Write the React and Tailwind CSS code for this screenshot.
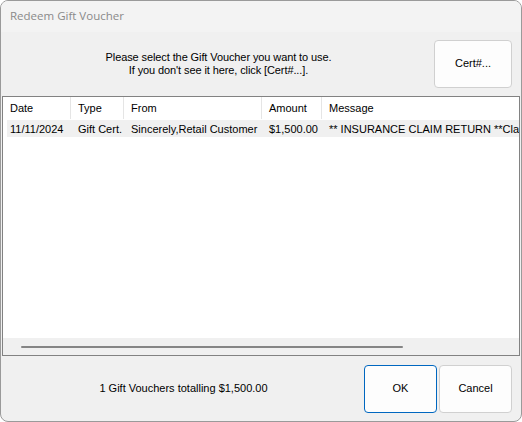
const rows = [
  {
    date: "11/11/2024",
    type: "Gift Cert.",
    from: "Sincerely,Retail Customer",
    amount: "$1,500.00",
    message: "** INSURANCE CLAIM RETURN **Claim #48213 - Store credit issued",
  },
];

const cols = [
  { key: "date", label: "Date", w: "w-[68px]", rw: "w-[64px]" },
  { key: "type", label: "Type", w: "w-[53px]", rw: "w-[53px]" },
  { key: "from", label: "From", w: "w-[138px]", rw: "w-[138px]" },
  { key: "amount", label: "Amount", w: "w-[60px]", rw: "w-[60px]" },
  { key: "message", label: "Message", w: "w-[260px]", rw: "w-[260px]" },
];

function App() {
  return (
    <div className="w-[522px] h-[422px] bg-white font-['Liberation_Sans',Arial,sans-serif] text-[11px] text-black">
      <div className="w-full h-full flex flex-col border border-[#9a9a9a] rounded-[8px] overflow-hidden bg-[#f0f0f0]">
        {/* title bar */}
        <div className="h-[31px] shrink-0 flex items-center pl-[9px] pb-[2px] bg-[#f3f3f3] font-['Open_Sans',sans-serif] text-[11.5px] text-[#8a8a8a]">
          Redeem Gift Voucher
        </div>

        {/* prompt + cert lookup */}
        <div className="h-[64px] shrink-0 flex items-center">
          <div className="flex-1 text-center leading-[13px] pl-[2px] tracking-[-0.1px]">
            <p>Please select the Gift Voucher you want to use.</p>
            <p>If you don't see it here, click [Cert#...].</p>
          </div>
          <button className="w-[78px] h-[48px] mr-[9px] mb-[1px] rounded-[4px] border border-[#d0d0d0] bg-[#fdfdfd]">
            Cert#...
          </button>
        </div>

        {/* voucher list */}
        <div className="mx-[1px] flex-1 flex flex-col border border-[#828282] bg-white overflow-hidden">
          <div className="flex-1 overflow-hidden">
            <div className="flex h-[22px] items-center whitespace-nowrap">
              {cols.map((c) => (
                <div
                  key={c.key}
                  className={`${c.w} shrink-0 h-full flex items-center pl-[7px] border-r border-[#e5e5e5]`}
                >
                  {c.label}
                </div>
              ))}
            </div>
            <div className="pt-[1px]">
              {rows.map((r, i) => (
                <div key={i} className="flex h-[17px] ml-[4px] pt-[1px] items-center whitespace-nowrap bg-[#f0f0f0] overflow-hidden">
                  {cols.map((c, j) => (
                    <div
                      key={c.key}
                      className={`${c.rw} shrink-0 overflow-hidden ${j === 0 ? "pl-[3px]" : "pl-[7px]"}`}
                    >
                      {r[c.key]}
                    </div>
                  ))}
                </div>
              ))}
            </div>
          </div>
          {/* horizontal scrollbar */}
          <div className="h-[17px] shrink-0 bg-[#f0f0f0] flex items-center pl-[18px]">
            <div className="w-[382px] h-[2px] bg-[#858585] rounded-full"></div>
          </div>
        </div>

        {/* footer */}
        <div className="h-[65px] shrink-0 flex items-center">
          <div className="w-[363px] text-center pl-[2px]">1 Gift Vouchers totalling $1,500.00</div>
          <button className="w-[73px] h-[48px] rounded-[4px] border border-[#0067c0] bg-[#fdfdfd]">OK</button>
          <button className="w-[73px] h-[48px] ml-[2px] rounded-[4px] border border-[#d0d0d0] bg-[#fdfdfd]">
            Cancel
          </button>
        </div>
      </div>
    </div>
  );
}

export default App;
